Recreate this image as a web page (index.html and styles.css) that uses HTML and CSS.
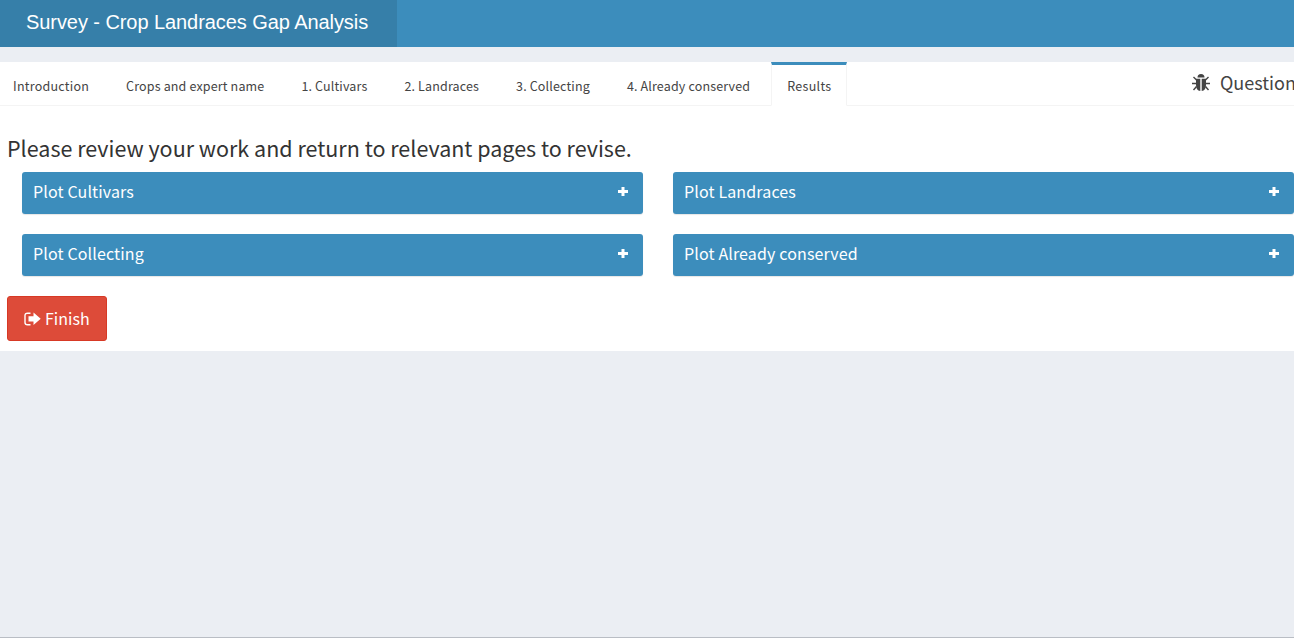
FILE: index.html
```html
<!DOCTYPE html>
<html lang="en">
<head>
<meta charset="utf-8">
<title>Survey - Crop Landraces Gap Analysis</title>
<link rel="stylesheet" href="styles.css">
</head>
<body>
<header class="main-header"><div class="logo"><span>Survey - Crop Landraces Gap Analysis</span></div></header>
<main class="content">
  <nav class="tabs">
    <a class="tab">Introduction</a>
    <a class="tab">Crops and expert name</a>
    <a class="tab">1. Cultivars</a>
    <a class="tab">2. Landraces</a>
    <a class="tab">3. Collecting</a>
    <a class="tab">4. Already conserved</a>
    <a class="tab active">Results</a>
    <div class="tabs-title">
      <svg class="bug" viewBox="0 0 18 18"><path d="M5.500 3.500a3.500 3.500 0 0 1 7 0zM4 4.700h4.300v12.300C5.500 16.700 4 14.500 4 11zM9.700 4.700H14V11c0 3.500-1.500 5.700-4.300 6z"/><path class="legs" d="M1.500 3 4.500 6M16.500 3l-3 3M0 9.500h4M14 9.500h4M4.500 12.500l-3 3.500M13.500 12.500l3 3.500"/></svg>
      <span>Question</span>
    </div>
  </nav>
  <section class="panel">
    <h3 class="heading">Please review your work and return to relevant pages to revise.</h3>
    <div class="boxes">
      <div class="box"><span>Plot Cultivars</span><svg class="plus" viewBox="0 0 10 10"><path d="M3.500 0h3v3H10v3H6.500v3h-3V6H0V3h3.500z"/></svg></div>
      <div class="box"><span>Plot Landraces</span><svg class="plus" viewBox="0 0 10 10"><path d="M3.500 0h3v3H10v3H6.500v3h-3V6H0V3h3.500z"/></svg></div>
      <div class="box"><span>Plot Collecting</span><svg class="plus" viewBox="0 0 10 10"><path d="M3.500 0h3v3H10v3H6.500v3h-3V6H0V3h3.500z"/></svg></div>
      <div class="box"><span>Plot Already conserved</span><svg class="plus" viewBox="0 0 10 10"><path d="M3.500 0h3v3H10v3H6.500v3h-3V6H0V3h3.500z"/></svg></div>
    </div>
    <button class="finish"><svg class="exit" viewBox="0 0 17 14"><path class="frame" d="M6.500 1.200H3.500Q1 1.200 1 3.500v7q0 2.300 2.500 2.300h3"/><path d="M4.500 4.300H9.500V0.500l7.200 6.300-7.200 6.300V9.500h-5z"/></svg><span>Finish</span></button>
  </section>
</main>
</body>
</html>
```
FILE: styles.css
```css
* { box-sizing: border-box; }
body {
  margin: 0;
  height: 638px;
  overflow: hidden;
  background: #ebeef3;
  border-bottom: 1px solid #b9bdc4;
  color: #333;
  font-family: "Noto Sans CJK JP", "Open Sans", sans-serif;
  font-size: 12.5px;
}
.main-header { height: 47px; background: #3c8dbc; }
.logo {
  width: 397px;
  height: 47px;
  padding-left: 26px;
  background: #367fa9;
  color: #fff;
  font: 20px/44px "Liberation Sans", Arial, sans-serif;
  letter-spacing: -.07px;
  white-space: nowrap;
}
.content { margin-top: 15px; height: 289px; background: #fff; }
.tabs {
  display: flex;
  height: 44px;
  border-bottom: 1px solid #f4f4f4;
  white-space: nowrap;
}
.tab {
  flex: none;
  height: 44px;
  margin-right: 5px;
  padding: 0 15px;
  border: 1px solid transparent;
  border-top: 3px solid transparent;
  line-height: 42px;
  letter-spacing: .15px;
  color: #444;
}
.tab:first-child { margin-left: -3px; letter-spacing: .24px; }
.active {
  background: #fff;
  border-color: #3c8dbc #f4f4f4 transparent;
  letter-spacing: .3px;
}
.tabs-title {
  display: flex;
  margin-left: auto;
  flex: 0 0 102px;
  min-width: 0;
  gap: 10px;
  line-height: 41px;
  font-size: 18px;
  color: #444;
}
.bug { flex: none; width: 18px; height: 18px; margin-top: 12px; fill: #444; }
.legs { fill: none; stroke: #444; stroke-width: 1.4; }
.panel { padding: 24px 0 0 7px; }
.heading { margin: 0; font-size: 21.500px; line-height: 36px; font-weight: 400; white-space: nowrap; }
.boxes {
  display: grid;
  grid-template-columns: 621px 621px;
  gap: 20px 30px;
  margin: 6px 0 20px 15px;
}
.box {
  display: flex;
  justify-content: space-between;
  height: 42px;
  padding: 0 15px 0 11px;
  border-radius: 3px;
  background: #3c8dbc;
  box-shadow: 0 1px 1px rgba(0, 0, 0, .1);
  color: #fff;
  font-size: 16px;
  letter-spacing: .14px;
  line-height: 38px;
}
.plus { width: 10px; height: 10px; margin-top: 15px; fill: #fff; }
.finish {
  display: flex;
  gap: 4px;
  width: 100px;
  height: 45px;
  padding: 0 0 0 16px;
  border: 1px solid #d73925;
  border-radius: 3px;
  background: #dd4b39;
  color: #fff;
  font: 16px/43px "Noto Sans CJK JP", "Open Sans", sans-serif;
}
.exit { width: 17px; height: 14px; margin-top: 15px; fill: #fff; }
.frame { fill: none; stroke: #fff; stroke-width: 1.4; }
```
